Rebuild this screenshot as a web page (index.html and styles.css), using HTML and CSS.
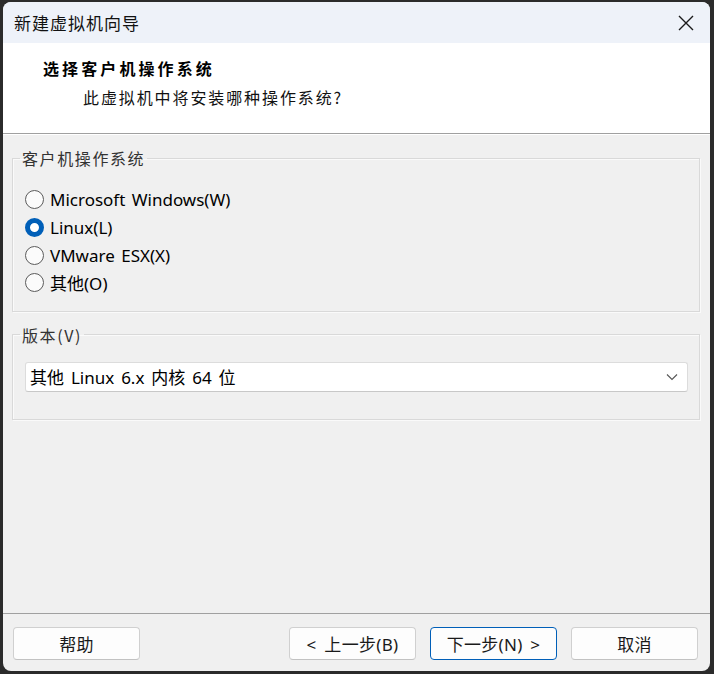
FILE: index.html
```html
<!DOCTYPE html>
<html lang="zh-CN">
<head>
<meta charset="utf-8">
<title>新建虚拟机向导</title>
<link rel="stylesheet" href="styles.css">
</head>
<body>
<div class="window">
  <div class="titlebar">
    <span class="title">新建虚拟机向导</span>
    <svg class="close" width="16" height="16" viewBox="0 0 16 16"><path d="M1 1 L15 15 M15 1 L1 15" stroke="#1a1a1a" stroke-width="1.4" fill="none"/></svg>
  </div>
  <div class="header">
    <div class="h-title">选择客户机操作系统</div>
    <div class="h-sub">此虚拟机中将安装哪种操作系统?</div>
  </div>
  <div class="content">
    <fieldset class="group">
      <legend>客户机操作系统</legend>
      <div class="radios">
        <label class="radio"><span class="dot"></span><span>Microsoft Windows(W)</span></label>
        <label class="radio checked"><span class="dot"></span><span>Linux(L)</span></label>
        <label class="radio"><span class="dot"></span><span>VMware ESX(X)</span></label>
        <label class="radio"><span class="dot"></span><span>其他(O)</span></label>
      </div>
    </fieldset>
    <fieldset class="group group2">
      <legend>版本(V)</legend>
      <div class="select">
        <span>其他 Linux 6.x 内核 64 位</span>
        <svg width="12" height="8" viewBox="0 0 12 8"><path d="M1 1.5 L6 6.5 L11 1.5" stroke="#555" stroke-width="1.1" fill="none"/></svg>
      </div>
    </fieldset>
  </div>
  <div class="footer">
    <button class="btn">帮助</button>
    <div class="spacer"></div>
    <button class="btn">&lt; 上一步(B)</button>
    <button class="btn primary">下一步(N) &gt;</button>
    <button class="btn">取消</button>
  </div>
</div>
</body>
</html>
```

FILE: styles.css
```css
html, body {
  margin: 0;
  padding: 0;
}
body {
  background: #2b2b2b;
  width: 714px;
  height: 674px;
  padding: 2px 4px 3px 3px;
  box-sizing: border-box;
  font-family: "Noto Sans", "Noto Sans CJK SC", sans-serif;
}
.window {
  width: 707px;
  height: 669px;
  border-radius: 8px;
  overflow: hidden;
  background: #f0f0f0;
  display: flex;
  flex-direction: column;
}
.titlebar {
  height: 41px;
  flex: none;
  background: #eef2f9;
  display: flex;
  align-items: center;
  justify-content: space-between;
  padding: 0 16px 0 11px;
}
.title {
  font-family: "Noto Sans CJK SC", sans-serif;
  font-size: 17px;
  letter-spacing: 1px;
  color: #111;
}
.close {
  display: block;
}
.header {
  height: 91px;
  flex: none;
  box-sizing: border-box;
  background: #fff;
  border-bottom: 1px solid #a0a0a0;
  padding: 14px 0 0 40px;
  font-family: "Noto Sans CJK SC", sans-serif;
}
.h-title {
  font-size: 16px;
  line-height: 22px;
  font-weight: 700;
  letter-spacing: 3.1px;
  color: #000;
}
.h-sub {
  margin: 7px 0 0 40px;
  font-size: 16px;
  line-height: 22px;
  letter-spacing: 1.9px;
  color: #111;
}
.content {
  flex: 1;
  padding: 0 10px 0 9px;
  border-top: 1px solid #fff;
}
.group {
  margin: 12px 0 0 0;
  padding: 0 11px 14px 12px;
  border: 1px solid #d9d9d9;
  box-shadow: inset 1px 1px 0 #fafafa, 1px 1px 0 #fafafa;
  min-width: 0;
}
.group legend {
  margin-left: -5px;
  padding: 0 2px;
  font-family: "Noto Sans CJK SC", sans-serif;
  font-size: 16px;
  line-height: 22px;
  letter-spacing: 1.6px;
  color: #333;
}
.radios {
  padding-top: 17px;
  display: flex;
  flex-direction: column;
}
.radio {
  height: 27.67px;
  display: flex;
  align-items: center;
  gap: 6px;
  font-size: 17px;
  color: #000;
  font-family: "Noto Sans", "Noto Sans CJK SC", sans-serif;
  word-spacing: 2px;
}
.dot {
  width: 19px;
  height: 19px;
  box-sizing: border-box;
  border: 1px solid #5c5c5c;
  border-radius: 50%;
  background: #fbfbfb;
  flex: none;
}
.checked .dot {
  border: 5.5px solid #005fb8;
  background: #fff;
}
.group2 {
  margin-top: 12px;
  padding-bottom: 27px;
}
.select {
  margin-top: 16px;
  height: 30px;
  box-sizing: border-box;
  background: #fff;
  border: 1px solid #dcdcdc;
  border-bottom-color: #c8c8c8;
  border-radius: 3px;
  display: flex;
  align-items: center;
  justify-content: space-between;
  padding: 0 9px 0 4px;
  font-size: 17px;
  word-spacing: 2.5px;
  color: #000;
}
.footer {
  flex: none;
  height: 58px;
  box-sizing: border-box;
  border-top: 1px solid #a0a0a0;
  padding: 13px 12px 11px 10px;
  display: flex;
  gap: 14px;
}
.spacer {
  flex: 1;
}
.btn {
  width: 127px;
  height: 33px;
  box-sizing: border-box;
  background: #fdfdfd;
  border: 1px solid #d0d0d0;
  border-bottom-color: #c2c2c2;
  border-radius: 4px;
  font-family: "Noto Sans", "Noto Sans CJK SC", sans-serif;
  font-size: 17px;
  word-spacing: 3px;
  letter-spacing: 0.3px;
  color: #1a1a1a;
  padding: 0;
}
.btn.primary {
  border: 1px solid #005fb8;
}
```
